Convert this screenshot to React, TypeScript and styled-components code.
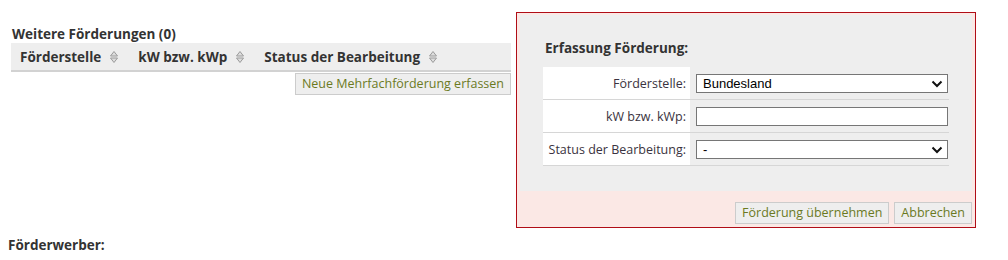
import React from "react";
import styled, { createGlobalStyle } from "styled-components";

const GlobalStyle = createGlobalStyle`
  body {
    margin: 8px;
    background: #ffffff;
    font-family: "Open Sans", "Noto Sans", sans-serif;
    font-size: 12.5px;
    color: #333333;
  }
`;

const Page = styled.div`
  width: 992px;
`;

const Top = styled.div`
  display: flex;
  align-items: flex-start;
  padding: 4px 0 0 3px;
`;

const LeftSection = styled.section`
  width: 500px;
  margin-top: 13px;
`;

const SectionTitle = styled.div`
  font-weight: 700;
  font-size: 13.5px;
  line-height: 18px;
  padding-left: 1px;
  color: #333333;
`;

const HeadRow = styled.div`
  display: flex;
  align-items: center;
  height: 27px;
  background: #eeeeee;
  border-bottom: 2px solid #d2d2d2;
`;

const HeadCell = styled.div`
  display: flex;
  align-items: center;
  font-weight: 700;
  font-size: 13.5px;
  color: #333333;
  padding: 0 11px 0 9px;
  white-space: nowrap;
`;

const SortSvg = styled.svg`
  margin-left: 9px;
  display: block;
`;

const SortIcon = () => (
  <SortSvg width="8" height="12" viewBox="0 0 8 12">
    <polygon points="4,0.5 7.5,5 0.5,5" fill="#dddddd" stroke="#9a9a9a" strokeWidth="1" />
    <polygon points="0.5,7 7.5,7 4,11.5" fill="#dddddd" stroke="#9a9a9a" strokeWidth="1" />
  </SortSvg>
);

const ButtonRow = styled.div`
  display: flex;
  justify-content: flex-end;
  margin-top: 1px;
`;

const ActionButton = styled.button`
  height: 22px;
  padding: 0 6px;
  background: #eeeeee;
  border: 1px solid #cccccc;
  border-radius: 0;
  color: #6b7a1f;
  font-family: "Open Sans", "Noto Sans", sans-serif;
  font-size: 12.5px;
  line-height: 20px;
  cursor: pointer;
`;

const Panel = styled.div`
  margin-left: 5px;
  width: 452px;
  border: 1px solid #b00d16;
  background: #fbe8e5;
  padding: 2px 3px 0 3px;
`;

const PanelBody = styled.div`
  background: #eeeeee;
  padding: 24px 23px 25px 23px;
`;

const PanelTitle = styled.div`
  font-weight: 700;
  font-size: 13.5px;
  line-height: 18px;
  padding-left: 2px;
  margin-bottom: 10px;
  color: #333333;
`;

const FormTable = styled.div`
  display: grid;
  grid-template-columns: 147px 1fr;
`;

const LabelCell = styled.label`
  display: flex;
  align-items: center;
  justify-content: flex-end;
  height: 32px;
  padding-right: 4px;
  background: #ffffff;
  border-bottom: 1px solid #d6d6d6;
  color: #3a3340;
  white-space: nowrap;
`;

const ValueCell = styled.div`
  display: flex;
  align-items: center;
  height: 32px;
  padding: 0 1px 0 6px;
  border-bottom: 1px solid #d6d6d6;
`;

const SelectWrap = styled.div`
  position: relative;
  width: 100%;
`;

const Select = styled.select`
  display: block;
  width: 100%;
  height: 19px;
  appearance: none;
  -webkit-appearance: none;
  border: 1px solid #767676;
  border-radius: 0;
  background: #ffffff;
  padding: 0 0 0 6px;
  font-family: "Liberation Sans", Arial, sans-serif;
  font-size: 13px;
  color: #000000;
  outline: none;
`;

const Chevron = styled.svg`
  position: absolute;
  right: 5px;
  top: 6px;
  pointer-events: none;
`;

const TextInput = styled.input`
  display: block;
  width: 100%;
  height: 19px;
  box-sizing: border-box;
  border: 1px solid #767676;
  border-radius: 0;
  background: #ffffff;
  padding: 0 6px;
  font-family: "Liberation Sans", Arial, sans-serif;
  font-size: 13px;
  outline: none;
`;

const PanelFooter = styled.div`
  display: flex;
  justify-content: flex-end;
  gap: 5px;
  padding: 11px 0 3px 0;
`;

const FooterLabel = styled.div`
  margin-top: 9px;
  font-weight: 700;
  font-size: 13.5px;
  line-height: 16px;
  color: #333333;
`;

const ChevronIcon = () => (
  <Chevron width="12" height="8" viewBox="0 0 12 8">
    <polyline points="1.5,1.5 6,6 10.5,1.5" fill="none" stroke="#111111" strokeWidth="2" />
  </Chevron>
);

const DropDown: React.FC<{ value: string; options: string[] }> = ({ value, options }) => (
  <SelectWrap>
    <Select defaultValue={value}>
      {options.map((o) => (
        <option key={o} value={o}>
          {o}
        </option>
      ))}
    </Select>
    <ChevronIcon />
  </SelectWrap>
);

const columns = ["Förderstelle", "kW bzw. kWp", "Status der Bearbeitung"];

export default function App() {
  return (
    <Page>
      <GlobalStyle />
      <Top>
        <LeftSection>
          <SectionTitle>Weitere Förderungen (0)</SectionTitle>
          <HeadRow>
            {columns.map((c) => (
              <HeadCell key={c}>
                {c}
                <SortIcon />
              </HeadCell>
            ))}
          </HeadRow>
          <ButtonRow>
            <ActionButton>Neue Mehrfachförderung erfassen</ActionButton>
          </ButtonRow>
        </LeftSection>
        <Panel>
          <PanelBody>
            <PanelTitle>Erfassung Förderung:</PanelTitle>
            <FormTable>
              <LabelCell>Förderstelle:</LabelCell>
              <ValueCell>
                <DropDown value="Bundesland" options={["Bundesland", "Bund", "Kommune"]} />
              </ValueCell>
              <LabelCell>kW bzw. kWp:</LabelCell>
              <ValueCell>
                <TextInput type="text" defaultValue="" />
              </ValueCell>
              <LabelCell>Status der Bearbeitung:</LabelCell>
              <ValueCell>
                <DropDown value="-" options={["-", "beantragt", "bewilligt"]} />
              </ValueCell>
            </FormTable>
          </PanelBody>
          <PanelFooter>
            <ActionButton>Förderung übernehmen</ActionButton>
            <ActionButton>Abbrechen</ActionButton>
          </PanelFooter>
        </Panel>
      </Top>
      <FooterLabel>Förderwerber:</FooterLabel>
    </Page>
  );
}
